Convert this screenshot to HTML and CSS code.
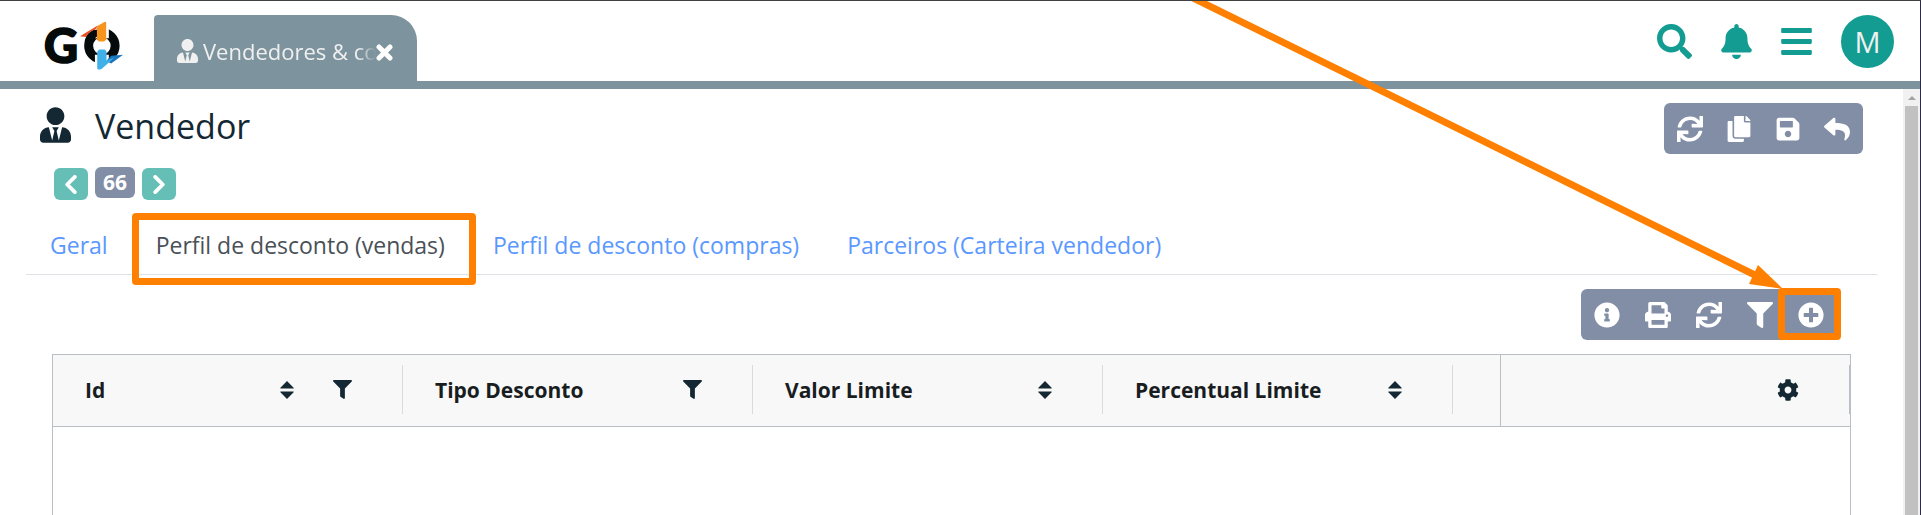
FILE: index.html
```html
<!DOCTYPE html>
<html lang="pt-BR">
<head>
<meta charset="utf-8">
<meta name="viewport" content="width=device-width, initial-scale=1">
<title>Vendedor</title>
<link rel="stylesheet" href="styles.css">
</head>
<body>
<svg class="sprite" aria-hidden="true">
  <symbol id="user-tie" viewBox="0 0 448 512"><path d="M224 256c70.7 0 128-57.3 128-128S294.7 0 224 0 96 57.3 96 128s57.3 128 128 128zm95.8 32.6L272 480l-32-136 32-56h-96l32 56-32 136-47.8-191.4C56.9 292 0 350.3 0 422.4V464c0 26.5 21.5 48 48 48h352c26.5 0 48-21.5 48-48v-41.6c0-72.1-56.9-130.4-128.2-133.8z"/></symbol>
  <symbol id="search" viewBox="0 0 512 512"><path d="M505 442.7L405.3 343c-4.5-4.5-10.6-7-17-7H372c27.6-35.3 44-79.7 44-128C416 93.1 322.9 0 208 0S0 93.1 0 208s93.1 208 208 208c48.3 0 92.7-16.4 128-44v16.3c0 6.4 2.5 12.5 7 17l99.7 99.7c9.4 9.4 24.6 9.4 33.9 0l28.3-28.3c9.4-9.4 9.4-24.6.1-34zM208 336c-70.7 0-128-57.2-128-128 0-70.7 57.2-128 128-128 70.7 0 128 57.2 128 128 0 70.7-57.2 128-128 128z"/></symbol>
  <symbol id="bell" viewBox="0 0 448 512"><path d="M224 512c35.32 0 63.97-28.65 63.97-64H160.03c0 35.35 28.65 64 63.97 64zm215.39-149.71c-19.32-20.76-55.47-51.99-55.47-154.29 0-77.7-54.48-139.9-127.94-155.16V32c0-17.67-14.32-32-31.98-32s-31.98 14.33-31.98 32v20.84C118.56 68.1 64.08 130.3 64.08 208c0 102.3-36.15 133.53-55.47 154.29-6 6.45-8.66 14.16-8.61 21.71.11 16.4 12.98 32 32.1 32h383.8c19.12 0 32-15.6 32.1-32 .05-7.55-2.61-15.27-8.61-21.71z"/></symbol>
  <symbol id="bars" viewBox="0 0 448 512"><path d="M16 132h416c8.8 0 16-7.2 16-16V76c0-8.8-7.2-16-16-16H16C7.200 60 0 67.200 0 76v40c0 8.800 7.200 16 16 16zm0 160h416c8.800 0 16-7.200 16-16v-40c0-8.800-7.200-16-16-16H16c-8.800 0-16 7.200-16 16v40c0 8.800 7.200 16 16 16zm0 160h416c8.800 0 16-7.200 16-16v-40c0-8.800-7.200-16-16-16H16c-8.800 0-16 7.200-16 16v40c0 8.800 7.200 16 16 16z"/></symbol>
  <symbol id="sync" viewBox="0 0 512 512"><path d="M440.65 12.57l4 82.77A247.16 247.16 0 0 0 255.83 8C134.73 8 33.91 94.92 12.29 209.82A12 12 0 0 0 24.09 224h49.05a12 12 0 0 0 11.67-9.26 175.91 175.91 0 0 1 317-56.94l-101.46-4.86a12 12 0 0 0-12.57 12v47.41a12 12 0 0 0 12 12H500a12 12 0 0 0 12-12V12a12 12 0 0 0-12-12h-47.37a12 12 0 0 0-11.98 12.57zM255.83 432a175.61 175.61 0 0 1-146-77.8l101.8 4.87a12 12 0 0 0 12.57-12v-47.4a12 12 0 0 0-12-12H12a12 12 0 0 0-12 12V500a12 12 0 0 0 12 12h47.35a12 12 0 0 0 12-12.6l-4.15-82.57A247.17 247.17 0 0 0 255.83 504c121.11 0 221.93-86.92 243.55-201.82a12 12 0 0 0-11.8-14.18h-49.05a12 12 0 0 0-11.67 9.26A175.86 175.86 0 0 1 255.83 432z"/></symbol>
  <symbol id="copy" viewBox="0 0 448 512"><path d="M320 448v40c0 13.255-10.745 24-24 24H24c-13.255 0-24-10.745-24-24V120c0-13.255 10.745-24 24-24h72v296c0 30.879 25.121 56 56 56h168zm0-344V0H152c-13.255 0-24 10.745-24 24v368c0 13.255 10.745 24 24 24h272c13.255 0 24-10.745 24-24V128H344c-13.2 0-24-10.8-24-24zm120.971-31.029L375.029 7.029A24 24 0 0 0 358.059 0H352v96h96v-6.059a24 24 0 0 0-7.029-16.97z"/></symbol>
  <symbol id="save" viewBox="0 0 448 512"><path d="M433.941 129.941l-83.882-83.882A48 48 0 0 0 316.118 32H48C21.49 32 0 53.49 0 80v352c0 26.51 21.49 48 48 48h352c26.51 0 48-21.49 48-48V163.882a48 48 0 0 0-14.059-33.941zM224 416c-35.346 0-64-28.654-64-64 0-35.346 28.654-64 64-64s64 28.654 64 64c0 35.346-28.654 64-64 64zm96-304.52V212c0 6.627-5.373 12-12 12H76c-6.627 0-12-5.373-12-12V108c0-6.627 5.373-12 12-12h228.52c3.183 0 6.235 1.264 8.485 3.515l3.48 3.48A11.996 11.996 0 0 1 320 111.48z"/></symbol>
  <symbol id="reply" viewBox="0 0 512 512"><path d="M8.309 189.836L184.313 37.851C199.719 24.546 224 35.347 224 56.015v80.053c160.629 1.839 288 34.032 288 186.258 0 61.441-39.581 122.309-83.333 154.132-13.653 9.931-33.111-2.533-28.077-18.631 45.344-145.012-21.507-183.51-176.59-185.742V360c0 20.7-24.3 31.453-39.687 18.164l-176.004-152c-11.071-9.562-11.086-26.753 0-36.328z"/></symbol>
  <symbol id="info" viewBox="0 0 512 512"><path d="M256 8C119.043 8 8 119.083 8 256c0 136.997 111.043 248 248 248s248-111.003 248-248C504 119.083 392.957 8 256 8zm0 110c23.196 0 42 18.804 42 42s-18.804 42-42 42-42-18.804-42-42 18.804-42 42-42zm56 254c0 6.627-5.373 12-12 12h-88c-6.627 0-12-5.373-12-12v-24c0-6.627 5.373-12 12-12h12v-64h-12c-6.627 0-12-5.373-12-12v-24c0-6.627 5.373-12 12-12h64c6.627 0 12 5.373 12 12v100h12c6.627 0 12 5.373 12 12v24z"/></symbol>
  <symbol id="print" viewBox="0 0 512 512"><path d="M448 192V77.25c0-8.49-3.37-16.62-9.37-22.63L393.37 9.37c-6-6-14.14-9.37-22.63-9.37H96C78.33 0 64 14.33 64 32v160c-35.35 0-64 28.65-64 64v112c0 8.84 7.16 16 16 16h48v96c0 17.67 14.33 32 32 32h320c17.67 0 32-14.33 32-32v-96h48c8.84 0 16-7.16 16-16V256c0-35.35-28.65-64-64-64zm-64 256H128v-96h256v96zm0-224H128V64h192v48c0 8.84 7.16 16 16 16h48v96zm48 72c-13.25 0-24-10.75-24-24 0-13.26 10.75-24 24-24s24 10.74 24 24c0 13.25-10.75 24-24 24z"/></symbol>
  <symbol id="filter" viewBox="0 0 512 512"><path d="M487.976 0H24.028C2.71 0-8.047 25.866 7.058 40.971L192 225.941V432c0 7.831 3.821 15.17 10.237 19.662l80 55.98C298.02 518.69 320 507.493 320 487.98V225.941l184.947-184.97C520.021 25.896 509.338 0 487.976 0z"/></symbol>
  <symbol id="plus" viewBox="0 0 512 512"><path d="M256 8C119 8 8 119 8 256s111 248 248 248 248-111 248-248S393 8 256 8zm144 276c0 6.600-5.400 12-12 12h-92v92c0 6.600-5.400 12-12 12h-56c-6.600 0-12-5.400-12-12v-92h-92c-6.600 0-12-5.400-12-12v-56c0-6.600 5.400-12 12-12h92v-92c0-6.600 5.400-12 12-12h56c6.600 0 12 5.400 12 12v92h92c6.600 0 12 5.400 12 12v56z"/></symbol>
  <symbol id="cog" viewBox="0 0 512 512"><path d="M487.400 315.700l-42.600-24.600c4.300-23.200 4.300-47 0-70.200l42.600-24.600c4.900-2.800 7.100-8.600 5.500-14-11.100-35.600-30-67.800-54.700-94.600-3.800-4.100-10-5.100-14.800-2.300L380.800 110c-17.900-15.400-38.500-27.300-60.800-35.100V25.800c0-5.600-3.900-10.500-9.400-11.700-36.700-8.200-74.300-7.800-109.200 0-5.500 1.200-9.400 6.100-9.400 11.700V75c-22.200 7.900-42.800 19.800-60.800 35.100L88.700 85.500c-4.900-2.800-11-1.900-14.800 2.300-24.700 26.700-43.600 58.900-54.700 94.600-1.700 5.400.6 11.200 5.500 14L67.300 221c-4.300 23.200-4.300 47 0 70.200l-42.600 24.600c-4.900 2.800-7.100 8.600-5.500 14 11.100 35.600 30 67.800 54.700 94.600 3.800 4.100 10 5.100 14.800 2.300l42.600-24.600c17.900 15.400 38.500 27.300 60.800 35.100v49.200c0 5.600 3.900 10.500 9.400 11.700 36.700 8.200 74.300 7.800 109.200 0 5.500-1.200 9.400-6.100 9.400-11.700v-49.200c22.200-7.900 42.800-19.800 60.800-35.100l42.600 24.600c4.900 2.800 11 1.900 14.800-2.300 24.700-26.700 43.600-58.900 54.700-94.600 1.500-5.500-.7-11.300-5.600-14.100zM256 336c-44.100 0-80-35.900-80-80s35.900-80 80-80 80 35.900 80 80-35.900 80-80 80z"/></symbol>
  <symbol id="sort" viewBox="0 0 14 19"><path d="M7 0l7 7v1H0V7zM0 11h14v1l-7 7-7-7z"/></symbol>
  <symbol id="times" viewBox="0 0 17 17"><path d="M3 3l11 11M14 3L3 14" fill="none" stroke="currentColor" stroke-width="5" stroke-linecap="round"/></symbol>
  <symbol id="left" viewBox="0 0 12 20"><path d="M10 2L2 10l8 8" fill="none" stroke="currentColor" stroke-width="4" stroke-linecap="round" stroke-linejoin="round"/></symbol>
  <symbol id="right" viewBox="0 0 12 20"><path d="M2 2l8 8-8 8" fill="none" stroke="currentColor" stroke-width="4" stroke-linecap="round" stroke-linejoin="round"/></symbol>
</svg>

<header class="topbar">
  <a class="logo" href="#" aria-label="GO">
    <svg class="logo-art" viewBox="134 64 237 148">
      <text class="logo-text" x="130" y="190">G</text>
      <circle cx="305" cy="139" r="40" fill="none" stroke="#050a0b" stroke-width="27"/>
      <path d="M284 76h42v40h-42zM284 166h42v40h-42z" fill="#fff"/>
      <path d="M291 90q-30 2-38 34l24 10q4-18 14-23z" fill="#050a0b"/>
      <path d="M239 110l52-32-3 10q-18 4-32 24z" fill="#f04e23"/>
      <path d="M290 80l23-13q5-2 5 3v50l-6 6h-16l-6-6z" fill="#f7941d"/>
      <path d="M318 185l15-16 36-3-36 26z" fill="#1b75bb"/>
      <path d="M291 156l6-6h16l6 6v28l24-10-38 34q-14 6-14-2z" fill="#3fb1e8"/>
    </svg>
  </a>
  <div class="apptab">
    <svg class="icon apptab-icon"><use href="#user-tie"/></svg>
    <span class="apptab-label">Vendedores &amp; compradores</span>
    <button class="plain apptab-close" type="button" aria-label="Fechar"><svg class="icon"><use href="#times"/></svg></button>
  </div>
  <nav class="actions" aria-label="Ações">
    <button class="plain" type="button" aria-label="Pesquisar"><svg class="icon search-icon"><use href="#search"/></svg></button>
    <button class="plain" type="button" aria-label="Notificações"><svg class="icon bell-icon"><use href="#bell"/></svg></button>
    <button class="plain" type="button" aria-label="Menu"><svg class="icon bell-icon"><use href="#bars"/></svg></button>
    <button class="avatar" type="button">M</button>
  </nav>
</header>

<div class="viewport">
  <main class="page">
    <div class="heading">
      <svg class="icon heading-icon"><use href="#user-tie"/></svg>
      <h1 class="title">Vendedor</h1>
      <div class="toolbar">
        <button class="tool" type="button" aria-label="Atualizar"><svg class="icon"><use href="#sync"/></svg></button>
        <button class="tool" type="button" aria-label="Copiar"><svg class="icon"><use href="#copy"/></svg></button>
        <button class="tool" type="button" aria-label="Salvar"><svg class="icon"><use href="#save"/></svg></button>
        <button class="tool" type="button" aria-label="Voltar"><svg class="icon"><use href="#reply"/></svg></button>
      </div>
    </div>
    <div class="pager">
      <button class="pager-step" type="button" aria-label="Anterior"><svg class="icon"><use href="#left"/></svg></button>
      <span class="pager-id">66</span>
      <button class="pager-step" type="button" aria-label="Próximo"><svg class="icon"><use href="#right"/></svg></button>
    </div>
    <nav class="tabs">
      <a class="tab" href="#">Geral</a>
      <a class="tab tab-active" href="#">Perfil de desconto (vendas)<span class="mark mark-tab"></span></a>
      <a class="tab" href="#">Perfil de desconto (compras)</a>
      <a class="tab" href="#">Parceiros (Carteira vendedor)</a>
    </nav>
    <div class="grid-tools">
      <div class="toolbar toolbar-grid">
        <button class="tool" type="button" aria-label="Informações"><svg class="icon"><use href="#info"/></svg></button>
        <button class="tool" type="button" aria-label="Imprimir"><svg class="icon"><use href="#print"/></svg></button>
        <button class="tool" type="button" aria-label="Atualizar"><svg class="icon"><use href="#sync"/></svg></button>
        <button class="tool" type="button" aria-label="Filtrar"><svg class="icon"><use href="#filter"/></svg></button>
        <button class="tool" type="button" aria-label="Adicionar"><svg class="icon"><use href="#plus"/></svg><span class="mark mark-tool"></span></button>
      </div>
    </div>
    <div class="grid">
      <table class="table">
        <colgroup><col class="col"><col class="col"><col class="col"><col class="col"><col><col class="col"></colgroup>
        <thead>
          <tr>
            <th scope="col"><div class="cell">Id<span class="cell-icons"><svg class="icon sort-icon"><use href="#sort"/></svg><svg class="icon filter-icon"><use href="#filter"/></svg></span></div></th>
            <th scope="col"><div class="cell">Tipo Desconto<span class="cell-icons"><svg class="icon filter-icon"><use href="#filter"/></svg></span></div></th>
            <th scope="col"><div class="cell">Valor Limite<span class="cell-icons"><svg class="icon sort-icon"><use href="#sort"/></svg></span></div></th>
            <th scope="col"><div class="cell">Percentual Limite<span class="cell-icons"><svg class="icon sort-icon"><use href="#sort"/></svg></span></div></th>
            <td></td>
            <th class="pinned" scope="col" aria-label="Configurações"><div class="cell cell-pinned"><span class="cell-icons"><svg class="icon cog-icon"><use href="#cog"/></svg></span></div></th>
          </tr>
        </thead>
      </table>
    </div>
  </main>
  <div class="scrollbar" aria-hidden="true">
    <svg class="scroll-arrow" viewBox="0 0 8 4"><path d="M4 0l4 4H0z"/></svg>
    <div class="scroll-thumb"></div>
  </div>
</div>

<svg class="pointer" viewBox="0 0 600 290" aria-hidden="true">
  <path d="M6 -4L580 279" stroke="#ff8000" stroke-width="7"/>
  <path d="M575 265L600 289 566 284z" fill="#ff8000"/>
</svg>
</body>
</html>
```
FILE: styles.css
```css
* { box-sizing: border-box; }

body {
  position: relative;
  display: flex;
  flex-direction: column;
  min-height: 100vh;
  margin: 0;
  border-top: 1px solid #404040;
  border-right: 1px solid #2b2b45;
  background: #fff;
  color: #132833;
  font-family: "Open Sans", "Noto Sans", sans-serif;
  font-size: 23px;
  overflow: hidden;
}

.sprite { position: absolute; width: 0; height: 0; }

.icon { display: block; width: 26px; height: 26px; fill: currentColor; }

button { font: inherit; cursor: pointer; }

.plain { padding: 0; border: 0; background: none; color: inherit; }

.topbar {
  display: flex;
  height: 88px;
  border-bottom: 8px solid #7d939d;
}

.logo { margin: 20px 30px 0 45px; }
.logo-art { display: block; width: 79px; height: 49px; overflow: visible; }
.logo-text {
  font-family: Lato, sans-serif;
  font-size: 142px;
  font-weight: 900;
  fill: #050a0b;
  stroke: #050a0b;
  stroke-width: 5px;
}

.apptab {
  display: flex;
  align-items: center;
  width: 263px;
  margin-top: 14px;
  padding: 5px 24px 0 23px;
  border-radius: 4px 26px 0 0;
  background: #7d939d;
  color: #f0f0f0;
  font-size: 22px;
}
.apptab-icon { flex: none; width: 21px; height: 24px; margin-right: 5px; }
.apptab-label {
  flex: 1;
  overflow: hidden;
  white-space: nowrap;
  mask-image: linear-gradient(to right, #000 calc(100% - 18px), transparent);
}
.apptab-close { padding-top: 3px; color: #fff; }
.apptab-close .icon { width: 17px; height: 17px; }

.actions {
  display: flex;
  align-items: center;
  gap: 29px;
  margin-left: auto;
  padding-right: 26px;
  color: #139c92;
}
.search-icon { width: 35px; height: 35px; }
.bell-icon { width: 31px; height: 35px; }
.avatar {
  width: 53px;
  height: 53px;
  padding: 0;
  border: 0;
  border-radius: 50%;
  background: #139c92;
  color: #f0f0f0;
  font-size: 29px;
}

.viewport { display: flex; flex: 1; }

.page {
  display: flex;
  flex: 1;
  flex-direction: column;
  padding: 14px 26px 0;
}

.heading { display: flex; align-items: flex-start; padding: 0 14px; }
.heading-icon { width: 31px; height: 36px; margin: 4px 24px 0 0; }
.title { margin: 0; font-size: 34px; font-weight: 500; line-height: 46px; }

.toolbar {
  display: flex;
  gap: 23px;
  margin-left: auto;
  padding: 13px 13px 12px;
  border-radius: 6px;
  background: #828ea6;
  color: #fff;
}
.toolbar-grid { gap: 25px; padding: 13px 16px 12px 13px; }
.tool {
  position: relative;
  padding: 0;
  border: 0;
  background: none;
  color: inherit;
}

.pager { display: flex; gap: 7px; padding: 13px 28px 0; }
.pager-step {
  display: flex;
  align-items: center;
  justify-content: center;
  width: 34px;
  height: 32px;
  margin-top: 1px;
  padding: 0;
  border: 0;
  border-radius: 6px;
  background: #65bfb7;
  color: #fff;
}
.pager-step .icon { width: 12px; height: 19px; }
.pager-id {
  height: 31px;
  padding: 0 8px;
  border-radius: 6px;
  background: #828ea6;
  color: #fff;
  font-size: 21px;
  font-weight: 700;
  line-height: 31px;
}

.tabs { display: flex; margin-top: 19px; border-bottom: 1px solid #dee2e6; }
.tab {
  position: relative;
  padding: 11px 24px 14px;
  color: #5a98ff;
  line-height: 30px;
  text-decoration: none;
  white-space: nowrap;
}
.tab-active { color: #495057; }

.mark { position: absolute; border: 7px solid #ff8000; border-radius: 4px; }
.mark-tab { inset: -6px -7px -11px 0; }
.mark-tool { inset: -14px -17px -12px -20px; }

.grid-tools { display: flex; padding: 14px 37px 14px 0; }

.grid {
  flex: 1;
  margin: 0 26px;
  border: 1px solid #babfc7;
  border-bottom: 0;
}
.table {
  width: 100%;
  border-collapse: collapse;
  table-layout: fixed;
  border-bottom: 1px solid #babfc7;
  background: #f8f8f8;
  color: #181d1f;
}
.col { width: 350px; }
.table th { padding: 10px 0 12px; text-align: left; font-size: 21px; font-weight: 700; }
.table .pinned { border-left: 1px solid #babfc7; }
.cell {
  display: flex;
  align-items: center;
  height: 49px;
  padding: 0 50px 0 32px;
  border-right: 1px solid #d8dce2;
  white-space: nowrap;
}
.cell-pinned { border-right-color: #babfc7; }
.cell-icons { display: flex; align-items: center; gap: 39px; margin-left: auto; color: #132833; }
.sort-icon { width: 14px; height: 18px; }
.filter-icon { width: 19px; height: 19px; }
.cog-icon { width: 22px; height: 22px; }

.scrollbar {
  display: flex;
  flex-direction: column;
  align-items: center;
  gap: 6px;
  width: 17px;
  padding-top: 7px;
  background: #f1f1f1;
}
.scroll-arrow { width: 8px; height: 4px; fill: #a3a3a3; }
.scroll-thumb { flex: 1; width: 13px; background: #c1c1c1; }

.pointer {
  position: absolute;
  top: -1px;
  right: 137px;
  width: 600px;
  height: 290px;
  pointer-events: none;
}
```
